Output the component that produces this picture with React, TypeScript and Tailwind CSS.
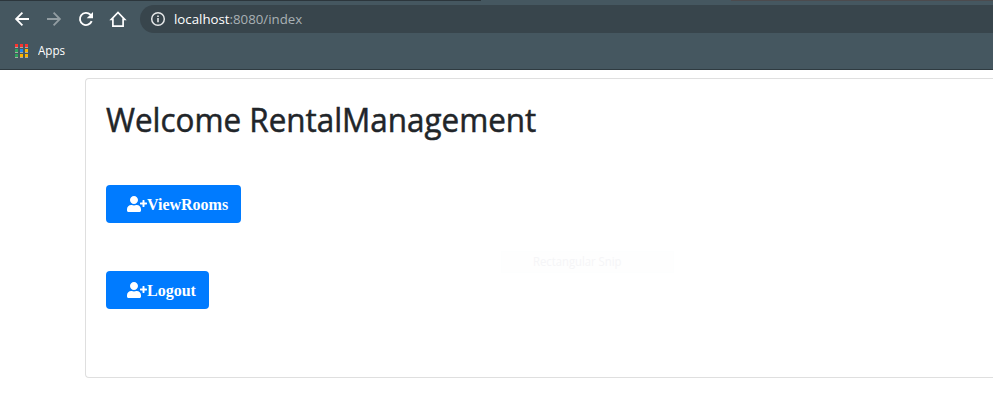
import { FaUserPlus } from "react-icons/fa";

const dots = [
  "bg-[#fb3530]", "bg-[#fb3530]", "bg-[#fb3530]",
  "bg-[#2fa35c]", "bg-[#1e88f0]", "bg-[#fbb400]",
  "bg-[#2fa35c]", "bg-[#fbb400]", "bg-[#fbb400]",
];

function BrowserBar() {
  return (
    <header className="h-[70px] border-b border-[#2f3b41] bg-[#455760]">
      <div className="flex h-px">
        <div className="w-[481px] bg-[#2c363c]" />
        <div className="w-[250px]" />
        <div className="flex-1 bg-[#4c4b4e]" />
      </div>
      <div className="flex h-[36px] items-center">
        <svg className="ml-[12px] h-5 w-5 shrink-0" viewBox="0 0 20 20" fill="none" stroke="#fff" strokeWidth="1.8">
          <path d="M17 10H4.5M10.4 3.7L4.1 10l6.3 6.3" />
        </svg>
        <svg className="ml-[12px] h-5 w-5 shrink-0" viewBox="0 0 20 20" fill="none" stroke="#929da2" strokeWidth="1.8">
          <path d="M3 10h12.5M9.6 3.7l6.3 6.3-6.3 6.3" />
        </svg>
        <svg className="ml-[12px] h-5 w-5 shrink-0" viewBox="0 0 20 20" fill="none">
          <path d="M15.7 12.2A6.1 6.1 0 1 1 14.4 5.7L15.6 6.9" stroke="#fff" strokeWidth="1.9" />
          <path d="M17 3v6.3h-6.3z" fill="#fff" />
        </svg>
        <svg className="ml-[12px] h-5 w-5 shrink-0" viewBox="0 0 20 20" fill="none" stroke="#fff" strokeWidth="1.7">
          <path d="M3.3 10.4H4.9V17.2h10.2v-6.8h1.6L10 3.4z" />
        </svg>
        <div className="ml-[12px] flex h-7 flex-1 items-center rounded-l-full bg-[#38454c] pl-[10px]">
          <svg className="h-4 w-4" viewBox="0 0 16 16" fill="none" stroke="#e6e8e9" strokeWidth="1.5">
            <circle cx="8" cy="8" r="6.3" />
            <path d="M8 7.1v4.2M8 4.5v1.5" strokeWidth="1.6" />
          </svg>
          <span className="ml-[8px] origin-left scale-x-[0.982] text-[13.5px] leading-5 text-[#a9b1b5]">
            <span className="text-white">localhost</span>:8080/index
          </span>
        </div>
      </div>
      <div className="flex h-[28px] items-center pl-[15px]">
        <div className="grid grid-cols-3 gap-x-[2px] gap-y-px">
          {dots.map((c, i) => (
            <span key={i} className={`h-1 w-[3px] border-b border-[#a9aaa6] ${c}`} />
          ))}
        </div>
        <span className="ml-[10px] origin-left scale-x-[0.97] text-xs text-white">Apps</span>
      </div>
    </header>
  );
}

function ActionButton({ label }: { label: string }) {
  return (
    <button className="flex h-[38px] items-center rounded-[4px] bg-[#007bff] pr-[13px] pl-[21px] font-['Liberation_Serif',serif] text-base font-bold text-white">
      <FaUserPlus className="h-4 w-5" />
      <span className="mt-[2px]">{label}</span>
    </button>
  );
}

export default function App() {
  return (
    <div className="h-[420px] overflow-hidden bg-white font-['Open_Sans','Noto_Sans',sans-serif]">
      <BrowserBar />
      <main className="relative mt-2 ml-[85px] flex h-[300px] flex-col items-start rounded-l-[4px] border border-r-0 border-[#dfdfdf] pl-5">
        <h1 className="mt-[22px] h-[38px] origin-left scale-x-[0.981] text-[32px] leading-[38px] font-medium whitespace-nowrap text-[#212529] [-webkit-text-stroke:0.5px_#212529]">
          Welcome RentalManagement
        </h1>
        <div className="mt-[46px]">
          <ActionButton label="ViewRooms" />
        </div>
        <div className="mt-12">
          <ActionButton label="Logout" />
        </div>
        <div className="absolute top-[172px] left-[415px] flex h-[22px] w-[173px] items-center border border-[#fdfefe] bg-[#fefefe] pl-[31px] text-xs text-[#f5f5f7]">
          <span className="origin-left scale-x-[0.94]">Rectangular Snip</span>
        </div>
      </main>
    </div>
  );
}
